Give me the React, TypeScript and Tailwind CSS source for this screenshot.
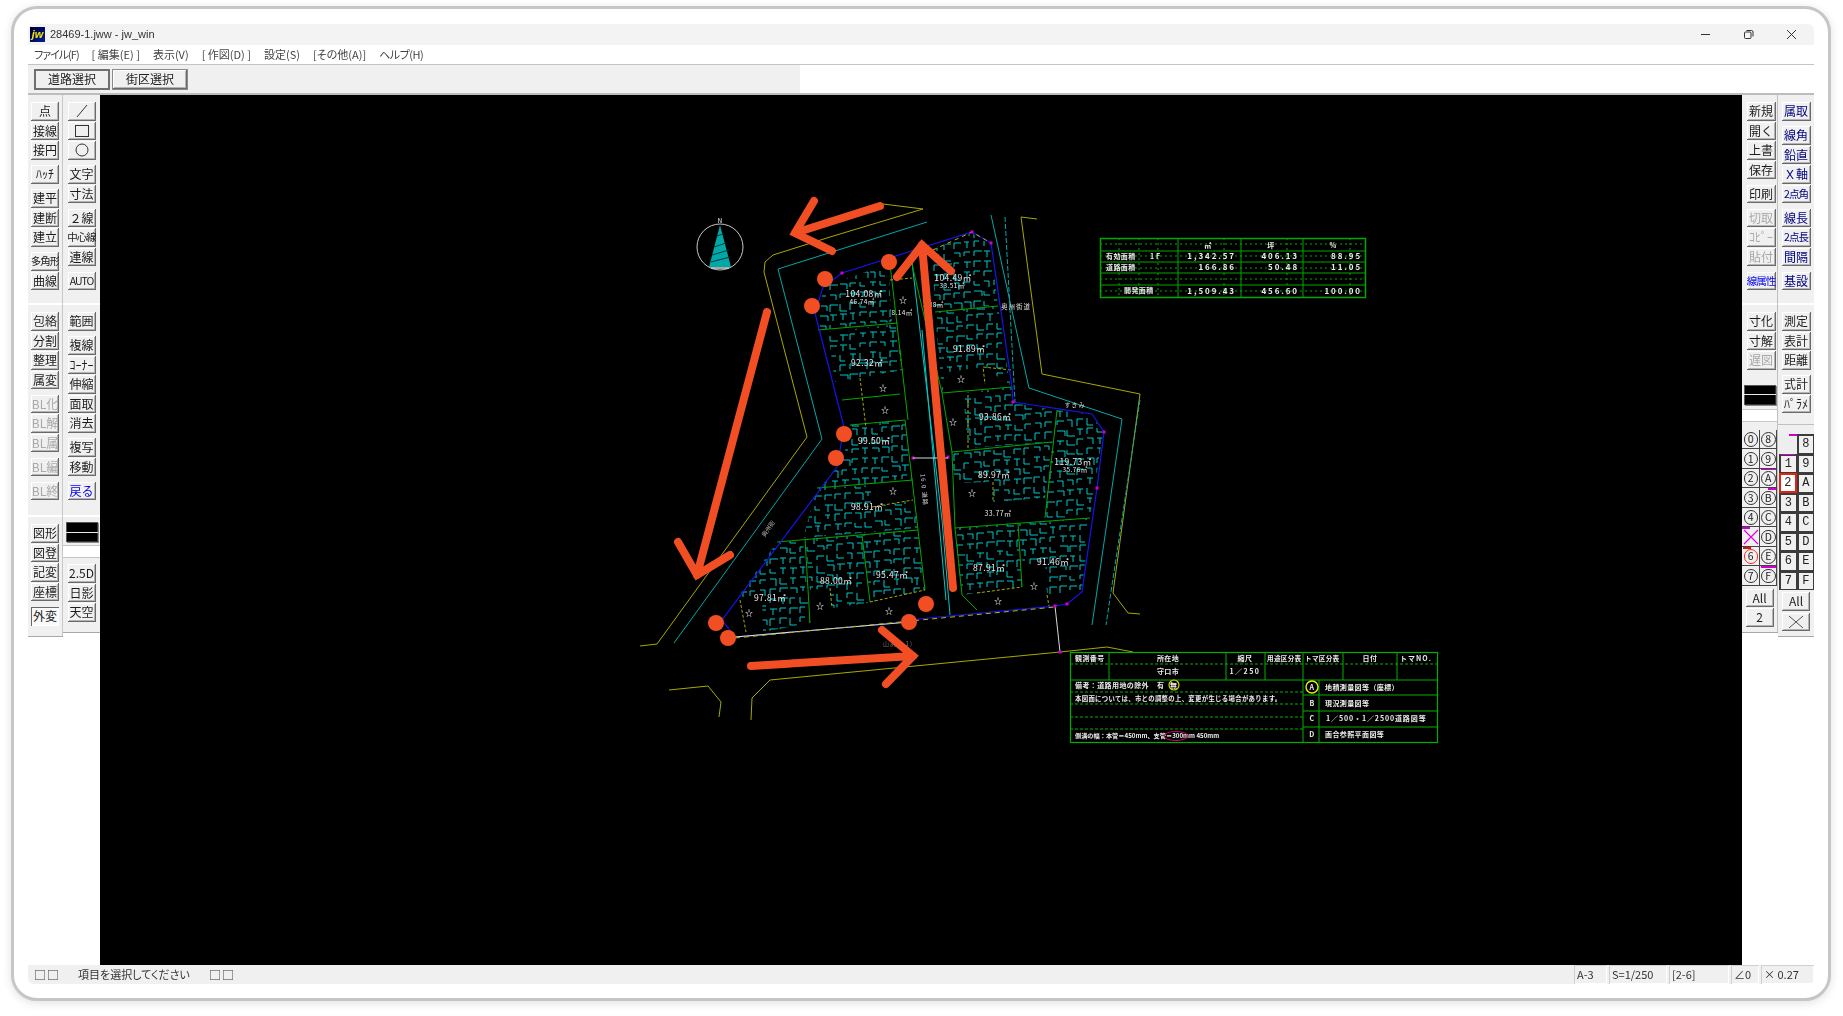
import { type ReactNode } from "react";

type Tone = "dim" | "blue" | "navy";
type Item = { label: ReactNode; tone?: Tone; small?: boolean };

const L = (label: ReactNode, tone?: Tone, small?: boolean): Item => ({ label, tone, small });

const raised =
  "shadow-[inset_-1px_-1px_0_#6a6a6a,inset_1px_1px_0_#ffffff,inset_-2px_-2px_0_#b4b4b4] bg-[#f0f0f0]";

function Tool({ item, wide }: { item: Item; wide?: boolean }) {
  const color =
    item.tone === "dim"
      ? "text-[#a9a9a9]"
      : item.tone === "blue"
        ? "text-[#0000f0]"
        : item.tone === "navy"
          ? "text-[#000080]"
          : "text-[#1c1c1c]";
  return (
    <button
      className={`flex h-[18.5px] items-center justify-center overflow-hidden whitespace-nowrap leading-none ${raised} ${color} ${
        wide ? "w-[29px]" : "w-[28px]"
      } ${item.small ? "text-[10.5px] tracking-[-1px]" : "text-[12px]"}`}
    >
      {item.label}
    </button>
  );
}

function Groups({ groups, wide }: { groups: Item[][]; wide?: boolean }) {
  return (
    <div className="flex flex-col items-center gap-[5.5px]">
      {groups.map((g, i) => (
        <div key={i} className="flex flex-col gap-[1px]">
          {g.map((item, j) => (
            <Tool key={j} item={item} wide={wide} />
          ))}
        </div>
      ))}
    </div>
  );
}

const Glyph = ({ children }: { children: ReactNode }) => (
  <svg width="16" height="14" viewBox="0 0 16 14" fill="none" stroke="#333" strokeWidth="1">
    {children}
  </svg>
);

const ColorBox = () => (
  <div className="flex h-[20px] w-[32px] flex-col justify-center bg-black shadow-[inset_1px_1px_0_#555,inset_-1px_-1px_0_#333,1px_1px_0_#888]">
    <div className="h-px w-full bg-[#e8e8e8]" />
  </div>
);

/* ---------- layer panels on the right ---------- */
const circleCells = ["0", "8", "1", "9", "2", "A", "3", "B", "4", "C", "X", "D", "6", "E", "7", "F"];
const numCells = ["0", "8", "1", "9", "2", "A", "3", "B", "4", "C", "5", "D", "6", "E", "7", "F"];

function CircleCell({ c }: { c: string }) {
  return (
    <div className="relative flex h-[19.5px] w-[17.5px] items-center justify-center bg-[#f0f0f0] shadow-[inset_-1px_-1px_0_#444]">
      {c === "X" ? (
        <svg width="16" height="16" viewBox="0 0 16 16" stroke="#e000e0" strokeWidth="1.2">
          <path d="M1 1 15 15M15 1 1 15" />
        </svg>
      ) : (
        <span
          className={`flex h-[14.5px] w-[14.5px] items-center justify-center rounded-full border text-[10.5px] leading-none ${
            c === "6" ? "border-[#f03020] text-[#222]" : "border-[#333] text-[#222]"
          }`}
        >
          {c}
        </span>
      )}
      {c === "A" && <i className="absolute left-[1px] top-0 h-[1.5px] w-[15px] bg-[#d000d0]" />}
      {c === "B" && <i className="absolute right-[1px] top-0 h-[1.5px] w-[8px] bg-[#d000d0]" />}
      {c === "X" && <i className="absolute left-0 top-0 h-[1.5px] w-[8px] bg-[#d000d0]" />}
      {c === "6" && <i className="absolute left-[1px] top-0 h-[2px] w-[8px] bg-[#e01010]" />}
      {c === "F" && <i className="absolute left-[1px] top-0 h-[1.5px] w-[15px] bg-[#d000d0]" />}
    </div>
  );
}

function NumCell({ c }: { c: string }) {
  if (c === "0") {
    return (
      <div className="relative h-[19.5px] w-[17.5px] bg-[#eeeeee]">
        <i className="absolute right-0 top-0 h-[1.5px] w-[8px] bg-[#d000d0]" />
      </div>
    );
  }
  const active = c === "2";
  return (
    <div
      className={`relative flex h-[19.5px] w-[17.5px] items-center justify-center font-['Liberation_Mono',monospace] text-[12px] leading-none text-[#222] ${
        active
          ? "border-2 border-[#e82010] bg-white"
          : "border-b border-l-2 border-r border-t-2 border-[#3c3c3c] bg-[#f0f0f0]"
      }`}
    >
      {c}
      {c === "1" && <i className="absolute -top-[2px] left-0 h-[1.5px] w-[14px] bg-[#d000d0]" />}
    </div>
  );
}

/* ---------- CAD drawing, all coordinates are page pixels ---------- */
type Pt = [number, number];

const lots: Pt[][] = [
  [[823, 287], [888, 264], [892, 322], [818, 330]],
  [[932, 250], [972, 233], [990, 245], [998, 305], [935, 312]],
  [[828, 332], [898, 324], [903, 370], [860, 378], [835, 382]],
  [[935, 312], [998, 306], [1010, 385], [983, 367], [948, 372], [942, 393]],
  [[963, 393], [1012, 387], [1013, 403], [1055, 410], [1052, 442], [968, 448]],
  [[1057, 410], [1092, 415], [1103, 433], [1094, 490], [1090, 517], [1045, 518], [1052, 445]],
  [[952, 452], [1052, 442], [1045, 498], [993, 502], [993, 482], [953, 483]],
  [[955, 528], [1018, 523], [1022, 587], [977, 593], [962, 595]],
  [[1018, 524], [1090, 518], [1082, 590], [1047, 595], [1045, 563], [1023, 565]],
  [[850, 425], [905, 420], [912, 480], [820, 488], [843, 460]],
  [[817, 488], [872, 485], [873, 507], [913, 500], [918, 528], [803, 538]],
  [[777, 542], [803, 540], [810, 623], [763, 632], [762, 597], [738, 597]],
  [[805, 539], [862, 535], [868, 603], [832, 608], [830, 588], [810, 590]],
  [[862, 534], [918, 530], [925, 590], [870, 602]],
];

function wallPath(seed: number, poly: Pt[]) {
  let s = seed * 7919 + 13;
  const rnd = () => {
    s = (s * 1664525 + 1013904223) % 4294967296;
    return s / 4294967296;
  };
  const xs = poly.map((p) => p[0]);
  const ys = poly.map((p) => p[1]);
  const x0 = Math.min(...xs);
  const x1 = Math.max(...xs);
  const y0 = Math.min(...ys);
  const y1 = Math.max(...ys);
  const step = 10;
  const tilt = -0.085;
  let d = "";
  for (let y = y0 - 8; y < y1 + 8; y += step) {
    for (let x = x0 - 8; x < x1 + 8; x += step) {
      const px = Math.round(x);
      const py = Math.round(y + (x - x0) * tilt);
      const w = 5 + Math.round(rnd() * 3);
      const h = 4 + Math.round(rnd() * 3);
      const kind = rnd();
      if (kind < 0.4) d += `M${px} ${py + h}V${py}h${w}`;
      else if (kind < 0.6) d += `M${px} ${py}h${w}v${h}`;
      else if (kind < 0.8) d += `M${px} ${py}h${w}M${px + 3} ${py}v${h}`;
      else d += `M${px} ${py}v${h}h${w}`;
    }
  }
  return d;
}

const pts = (p: Pt[]) => p.map((q) => q.join(",")).join(" ");

const boundary: Pt[] = [
  [972, 232], [991, 243], [1012, 387], [1013, 402], [1092, 414], [1104, 432], [1097, 488], [1082, 592],
  [1067, 604], [1055, 606], [918, 619], [909, 622], [735, 637], [722, 620], [837, 467], [844, 427],
  [815, 313], [823, 287], [842, 273],
];

const roadsYellow = [
  "883,204 923,209 830,237 773,255 765,262 764,272 807,437 657,644 640,646",
  "1037,219 1021,217 1042,374 1140,394 1113,593 1128,613 1140,614",
  "669,690 708,686 721,702 719,717",
  "751,720 752,698 770,680 1060,652 1107,647 1133,652",
];

const roadsCyan = [
  "927,222 778,269 822,439 674,643",
  "991,215 1029,388 1122,419 1092,625",
  "1005,217 1015,402",
  "1140,400 1106,625",
];

const greenLines = [
  "818,330 898,323", "890,264 908,420", "935,312 998,306", "911,260 942,393 952,452 955,528 962,595",
  "942,393 1012,387", "1057,410 1045,518", "952,452 1052,442", "955,528 1090,518", "1018,523 1022,587",
  "850,425 905,420", "905,420 918,530 925,590", "817,488 913,480", "777,542 918,530", "805,539 810,623",
  "862,535 870,602", "842,400 900,394", "962,595 977,610",
];

const parking = [
  "890,280 912,278", "860,378 866,428", "1011,370 983,367 985,384", "968,395 968,448",
  "870,602 925,590", "977,593 1022,587", "830,588 832,608", "1047,595 1049,606", "740,600 746,632",
  "872,507 913,500", "993,482 993,502",
];

const stars: Pt[] = [
  [903, 300], [883, 388], [885, 410], [961, 379], [953, 422], [972, 493], [893, 491], [820, 606], [749, 613],
  [889, 611], [998, 601], [1034, 586],
];

const areas: [string, number, number, number][] = [
  ["104.08㎡", 864, 297, 8.5], ["46.74㎡", 862, 304, 6.5], ["104.49㎡", 953, 281, 8.5], ["33.51㎡", 952, 288, 6.5],
  ["8.14㎡", 902, 315, 6.5], ["1.88㎡", 933, 307, 6.5], ["92.32㎡", 867, 366, 8.5], ["91.89㎡", 969, 352, 8.5],
  ["93.86㎡", 995, 420, 8.5], ["99.50㎡", 874, 444, 8.5], ["119.73㎡", 1073, 465, 8.5], ["35.76㎡", 1075, 472, 6.5],
  ["89.97㎡", 994, 478, 8.5], ["98.91㎡", 867, 510, 8.5], ["33.77㎡", 998, 516, 7], ["95.47㎡", 892, 578, 8.5],
  ["88.00㎡", 836, 584, 8.5], ["97.81㎡", 770, 601, 8.5], ["87.91㎡", 989, 571, 8.5], ["91.46㎡", 1053, 565, 8.5],
];

const dots: Pt[] = [
  [889, 262], [825, 279], [812, 306], [844, 434], [836, 458], [716, 623], [728, 638], [909, 622], [926, 604],
];

const arrows = [
  "M880 206 795 233M814 201 795 233 832 251",
  "M953 588 922 245M897 277 922 245 951 271",
  "M767 312 697 575M678 542 697 575 730 555",
  "M751 666 913 656M882 630 913 656 886 684",
];

const Label = ({ x, y, children, size = 7, anchor = "start", spacing = 0.4 }: {
  x: number;
  y: number;
  children: ReactNode;
  size?: number;
  anchor?: "start" | "middle" | "end";
  spacing?: number;
}) => (
  <text x={x} y={y} fontSize={size} fill="#ececec" textAnchor={anchor} fontWeight={700} letterSpacing={spacing}>
    {children}
  </text>
);

function AreaTable() {
  const g = "#00a800";
  const wide = 1.9;
  return (
    <g>
      <rect x="1100.5" y="238.5" width="265" height="59" fill="none" stroke={g} strokeWidth="1.5" />
      {[251, 262, 273, 285].map((y) => (
        <path key={y} d={`M1100 ${y}H1366`} stroke={g} />
      ))}
      {[1178, 1241, 1303].map((x) => (
        <path key={x} d={`M${x} 238V297`} stroke={g} />
      ))}
      {[244, 256, 268, 279, 291].map((y) => (
        <path key={y} d={`M1100 ${y}H1366`} stroke={g} strokeDasharray="2 3" />
      ))}
      {[1119, 1139, 1158, 1224, 1287, 1350].map((x) => (
        <path key={x} d={`M${x} 238V297`} stroke={g} strokeDasharray="2 3" />
      ))}
      <Label x={1208} y={248} anchor="middle">㎡</Label>
      <Label x={1271} y={248} anchor="middle">坪</Label>
      <Label x={1333} y={248} anchor="middle">%</Label>
      <Label x={1106} y={259}>有効面積</Label>
      <Label x={1150} y={259} spacing={wide}>1F</Label>
      <Label x={1236} y={259} anchor="end" size={8} spacing={wide}>1,342.57</Label>
      <Label x={1299} y={259} anchor="end" size={8} spacing={wide}>406.13</Label>
      <Label x={1362} y={259} anchor="end" size={8} spacing={wide}>88.95</Label>
      <Label x={1106} y={270}>道路面積</Label>
      <Label x={1236} y={270} anchor="end" size={8} spacing={wide}>166.86</Label>
      <Label x={1299} y={270} anchor="end" size={8} spacing={wide}>50.48</Label>
      <Label x={1362} y={270} anchor="end" size={8} spacing={wide}>11.05</Label>
      <Label x={1124} y={293}>開発面積</Label>
      <Label x={1236} y={294} anchor="end" size={8} spacing={wide}>1,509.43</Label>
      <Label x={1299} y={294} anchor="end" size={8} spacing={wide}>456.60</Label>
      <Label x={1362} y={294} anchor="end" size={8} spacing={wide}>100.00</Label>
    </g>
  );
}

function TitleTable() {
  const g = "#00b000";
  return (
    <g>
      <rect x="1070.5" y="652.5" width="367" height="90" fill="none" stroke={g} strokeWidth="1.2" />
      <path d="M1070 680H1437M1303 695H1437M1303 711H1437M1303 727H1437M1303 680V743M1319 680V743" stroke={g} />
      {[1109, 1226, 1265, 1303, 1343, 1397].map((x) => (
        <path key={x} d={`M${x} 652V680`} stroke={g} />
      ))}
      {[664, 692, 704, 717, 729].map((y) => (
        <path key={y} d={y === 664 ? "M1070 664H1437" : `M1070 ${y}H1303`} stroke={g} strokeDasharray="3 2" />
      ))}
      <Label x={1075} y={661}>観測番号</Label>
      <Label x={1168} y={661} anchor="middle">所在地</Label>
      <Label x={1245} y={661} anchor="middle">縮尺</Label>
      <Label x={1267} y={661} size={6.6} spacing={0.3}>用途区分表</Label>
      <Label x={1305} y={661} size={6.6} spacing={0.3}>トマ区分表</Label>
      <Label x={1370} y={661} anchor="middle">日付</Label>
      <Label x={1400} y={661} spacing={1}>トマNO.</Label>
      <Label x={1168} y={674} anchor="middle">守口市</Label>
      <Label x={1245} y={674} anchor="middle" spacing={1.5}>1／250</Label>
      <Label x={1075} y={688}>備考：道路用地の除外</Label>
      <Label x={1157} y={688}>有</Label>
      <Label x={1170} y={688}>無</Label>
      <Label x={1075} y={701} size={6.4} spacing={0.3}>本図面については、市との調整の上、変更が生じる場合があります。</Label>
      <Label x={1075} y={738} size={6.2} spacing={0}>側溝の幅：本管＝450mm、支管＝300mm 450mm</Label>
      <Label x={1312} y={690} anchor="middle">A</Label>
      <Label x={1312} y={706} anchor="middle">B</Label>
      <Label x={1312} y={721} anchor="middle">C</Label>
      <Label x={1312} y={737} anchor="middle">D</Label>
      <Label x={1325} y={690}>地積測量図等（座標）</Label>
      <Label x={1325} y={706}>現況測量図等</Label>
      <Label x={1326} y={721} spacing={0.9}>1／500・1／2500道路図等</Label>
      <Label x={1325} y={737}>画合参照平面図等</Label>
      <circle cx="1312" cy="687" r="6" fill="none" stroke="#f0f000" strokeWidth="1.4" />
      <circle cx="1174" cy="685" r="5" fill="none" stroke="#d8d800" strokeWidth="1.2" />
      <ellipse cx="1176" cy="736" rx="12" ry="4.5" fill="none" stroke="#d0006a" strokeWidth="1" />
    </g>
  );
}

function Drawing() {
  return (
    <svg viewBox="100 95 1642 870" className="block h-full w-full" fill="none">
      <defs>
        {lots.map((p, i) => (
          <clipPath id={`lot-${i}`} key={i}>
            <polygon points={pts(p)} />
          </clipPath>
        ))}
      </defs>

      {/* north mark */}
      <circle cx="720" cy="247" r="23" stroke="#c8c8c8" strokeWidth="1" />
      <polygon points="720,225 709,267 731,267" fill="#00a8a8" />
      <path d="M714 247 726 243M712 255 729 250M711 262 730 257M717 236 723 234" stroke="#003838" />
      <path d="M711 268H729" stroke="#e0e0e0" strokeWidth="1.5" />
      <text x="720" y="223" fontSize="6" fill="#fff" textAnchor="middle">N</text>

      {/* roads */}
      {roadsYellow.map((p) => (
        <polyline key={p} points={p} stroke="#a8a800" strokeWidth="1" />
      ))}
      {roadsCyan.map((p, i) => (
        <polyline key={p} points={p} stroke="#00a8a8" strokeWidth="1" strokeDasharray={i > 1 ? "5 2" : undefined} />
      ))}

      {/* walls */}
      {lots.map((p, i) => (
        <g key={i} clipPath={`url(#lot-${i})`}>
          <path d={wallPath(i + 1, p)} stroke="#00c8c8" strokeWidth="1" />
        </g>
      ))}

      {/* center road */}
      <path d="M912 262 942 520 950 615M922 330 946 600" stroke="#00c8c8" />

      {greenLines.map((p) => (
        <polyline key={p} points={p} stroke="#00a800" strokeWidth="1" />
      ))}
      {parking.map((p) => (
        <polyline key={p} points={p} stroke="#a8a800" strokeWidth="1" strokeDasharray="3 2" />
      ))}

      {/* site boundary */}
      <polygon points={pts(boundary)} stroke="#1414f0" strokeWidth="1.2" />
      <polyline points="735,637 909,622" stroke="#e0e0e0" strokeWidth="1.2" />
      <polyline points="735,638 1055,607" stroke="#b8b800" strokeWidth="1" strokeDasharray="5 4" />
      <polyline points="933,250 972,232 991,243" stroke="#b8b800" strokeWidth="1" strokeDasharray="4 4" />
      <polyline points="1055,606 1060,652" stroke="#d8d8d8" strokeWidth="1" />
      {([[842, 273], [972, 232], [991, 243], [1013, 402], [1104, 432], [1097, 488], [1055, 606], [1067, 604], [1060, 652], [913, 458], [948, 457]] as Pt[]).map(
        ([x, y]) => (
          <rect key={`${x}-${y}`} x={x - 1.5} y={y - 1.5} width="3" height="3" fill="#d000d0" />
        ),
      )}
      <path d="M913 458H948" stroke="#d8d8d8" />

      {stars.map(([x, y]) => (
        <text key={`${x}${y}`} x={x} y={y + 3} fontSize="8" fill="#fff" textAnchor="middle">☆</text>
      ))}
      {areas.map(([t, x, y, size]) => (
        <text key={t} x={x} y={y} fontSize={size} fill="#e8e8e8" textAnchor="middle" letterSpacing="0.4">{t}</text>
      ))}
      <text x="1016" y="309" fontSize="6.5" fill="#e0e0e0" textAnchor="middle" letterSpacing="1">奥州街道</text>
      <text x="1075" y="407" fontSize="6" fill="#d0d0d0" textAnchor="middle" letterSpacing="1">すきみ</text>
      <text x="898" y="646" fontSize="6" fill="#707070" textAnchor="middle" letterSpacing="1">山尻 (-1)</text>
      <text x="0" y="0" fontSize="6" fill="#b8b8b8" textAnchor="middle" transform="translate(770 530) rotate(-55)">奥州街</text>
      <text x="0" y="0" fontSize="6" fill="#d0d0d0" textAnchor="middle" letterSpacing="1" transform="translate(922 490) rotate(85)">16.0 道路</text>

      <AreaTable />
      <TitleTable />

      {/* markup */}
      {arrows.map((d) => (
        <path key={d} d={d} stroke="#f24e23" strokeWidth="8" strokeLinecap="round" strokeLinejoin="miter" />
      ))}
      {dots.map(([x, y]) => (
        <circle key={`${x}${y}`} cx={x} cy={y} r="8" fill="#f24e23" />
      ))}
    </svg>
  );
}

export default function App() {
  const sectionLine = "border-b-2 border-b-white";
  return (
    <div className="h-screen w-screen overflow-hidden bg-white pb-[15px] pl-[11px] pr-[12px] pt-[6px] font-['Noto_Sans_CJK_JP','Liberation_Sans',sans-serif]">
      <div className="flex h-full flex-col rounded-[26px] border-[3px] border-[#c6c6c6] bg-white pb-[14px] pl-[14px] pr-[14px] pt-[15px] shadow-[0_2px_10px_rgba(0,0,0,0.12)]">
        <div className="flex h-full flex-col blur-[0.3px]">
          {/* title bar */}
          <div className="flex h-[21px] items-center rounded-t-[6px] bg-[#f3f3f3] pl-[2px] font-['Liberation_Sans',sans-serif] text-[11px] text-[#333]">
            <div className="flex h-[15px] w-[15px] items-center justify-center bg-gradient-to-br from-[#000030] to-[#0020a0] text-[11px] font-bold italic leading-none text-[#f4e800]">
              jw
            </div>
            <span className="ml-[5px]">28469-1.jww - jw_win</span>
            <div className="ml-auto flex items-center gap-[32px] pr-[17px]">
              <svg width="11" height="11" viewBox="0 0 11 11" stroke="#333"><path d="M1 5.5H10" /></svg>
              <svg width="11" height="11" viewBox="0 0 11 11" stroke="#333" fill="none">
                <rect x="1.5" y="3" width="6.5" height="6.5" rx="1" />
                <path d="M3.5 1.5H8.5A1.5 1.5 0 0 1 10 3V7.5" />
              </svg>
              <svg width="11" height="11" viewBox="0 0 11 11" stroke="#333"><path d="M1 1 10 10M10 1 1 10" /></svg>
            </div>
          </div>

          {/* menu */}
          <div className="flex h-[20px] items-center gap-[13px] whitespace-nowrap border-b border-[#c4c4c4] pl-[6px] text-[11px] text-[#444] [font-feature-settings:'palt']">
            <span className="tracking-[-1px]">ファイル(F)</span>
            <span>[ 編集(E) ]</span>
            <span>表示(V)</span>
            <span>[ 作図(D) ]</span>
            <span>設定(S)</span>
            <span>[その他(A)]</span>
            <span className="tracking-[-0.5px]">ヘルプ(H)</span>
          </div>

          {/* tool options */}
          <div className="flex h-[30px] border-b-2 border-[#bdbdbd]">
            <div className="flex w-[772px] items-center gap-[2px] bg-[#f0f0f0] pl-[6px]">
              <button className="h-[21px] w-[76px] border-2 border-[#707070] bg-[#f0f0f0] text-[12px] leading-none text-[#222]">
                道路選択
              </button>
              <button className={`h-[21px] w-[76px] border border-[#8a8a8a] text-[12px] leading-none text-[#222] ${raised}`}>
                街区選択
              </button>
            </div>
          </div>

          {/* body */}
          <div className="flex min-h-0 flex-1">
            <aside className="flex w-[72px] items-start bg-white">
              <div className="w-[35px] border-r border-r-[#c8c8c8] bg-[#f0f0f0] shadow-[0_1px_0_#a8a8a8]">
                <div className={`h-[210px] pt-[7px] ${sectionLine}`}>
                  <Groups
                    groups={[
                      [L("点"), L("接線"), L("接円")],
                      [L("ﾊｯﾁ")],
                      [L("建平"), L("建断"), L("建立")],
                      [L("多角形", undefined, true), L("曲線")],
                    ]}
                  />
                </div>
                <div className={`h-[212px] pt-[7px] ${sectionLine}`}>
                  <Groups
                    groups={[
                      [L("包絡"), L("分割"), L("整理"), L("属変")],
                      [L("BL化", "dim"), L("BL解", "dim"), L("BL属", "dim")],
                      [L("BL編", "dim")],
                      [L("BL終", "dim")],
                    ]}
                  />
                </div>
                <div className="h-[119px] pt-[7px]">
                  <div className="flex flex-col items-center gap-[1px]">
                    <Tool item={L("図形")} />
                    <Tool item={L("図登")} />
                    <Tool item={L("記変")} />
                    <Tool item={L("座標")} />
                    <button className="mt-[4.5px] flex h-[19px] w-[28px] items-center justify-center bg-[#fafafa] text-[12px] leading-none text-[#222] shadow-[inset_1px_1px_0_#666,inset_-1px_-1px_0_#fff]">
                      外変
                    </button>
                  </div>
                </div>
              </div>
              <div className="w-[37px] bg-[#f0f0f0] shadow-[0_1px_0_#a8a8a8]">
                <div className={`h-[210px] pt-[7px] ${sectionLine}`}>
                  <Groups
                    groups={[
                      [
                        L(<Glyph><path d="M3 13 13 1" /></Glyph>),
                        L(<Glyph><rect x="1.5" y="1.5" width="13" height="11" /></Glyph>),
                        L(<Glyph><circle cx="8" cy="7" r="6" /></Glyph>),
                      ],
                      [L("文字"), L("寸法")],
                      [L("２線"), L("中心線", undefined, true), L("連線")],
                      [L("AUTO", undefined, true)],
                    ]}
                  />
                </div>
                <div className={`h-[212px] pt-[7px] ${sectionLine}`}>
                  <Groups
                    groups={[
                      [L("範囲")],
                      [L("複線"), L("ｺｰﾅｰ"), L("伸縮"), L("面取"), L("消去")],
                      [L("複写"), L("移動")],
                      [L("戻る", "blue")],
                    ]}
                  />
                </div>
                <div className="h-[115px]">
                  <div className="flex h-[29px] justify-center border-b border-[#c4c4c4] bg-[#f0f0f0] pt-[5px]">
                    <ColorBox />
                  </div>
                  <div className="h-[12px] border-b border-[#c4c4c4] bg-white" />
                  <div className="flex flex-col items-center gap-[1px] pt-[6px]">
                    <Tool item={L("2.5D")} />
                    <Tool item={L("日影")} />
                    <Tool item={L("天空")} />
                  </div>
                </div>
              </div>
            </aside>

            <main className="min-w-0 flex-1 bg-black">
              <Drawing />
            </main>

            <aside className="flex w-[72px] items-start bg-white">
              <div className="w-[36px] border-r border-r-[#c0c0c0] bg-[#f0f0f0] shadow-[0_1px_0_#a8a8a8]">
                <div className={`h-[210px] pl-[3px] pt-[7px] ${sectionLine}`}>
                  <Groups
                    wide
                    groups={[
                      [L("新規"), L("開く"), L("上書"), L("保存")],
                      [L("印刷")],
                      [L("切取", "dim"), L("ｺﾋﾟｰ", "dim"), L("貼付", "dim")],
                      [L("線属性", "blue", true)],
                    ]}
                  />
                </div>
                <div className="pl-[3px] pt-[7px]">
                  <Groups wide groups={[[L("寸化"), L("寸解"), L("遅図", "dim")]]} />
                </div>
                <div className="flex h-[36px] items-center justify-center bg-[#f0f0f0] pt-[14px]">
                  <ColorBox />
                </div>
                <div className="mt-[3px] h-[13px] border-y border-[#c8c8c8] bg-white" />
                <div className="grid grid-cols-2 pt-[8px]">
                  {circleCells.map((c) => (
                    <CircleCell key={c} c={c} />
                  ))}
                </div>
                <div className="flex h-[46px] flex-col items-center gap-[1px] pt-[3px]">
                  <Tool item={L("All")} />
                  <Tool item={L("2")} />
                </div>
              </div>
              <div className="w-[36px] bg-[#f0f0f0] shadow-[0_1px_0_#a8a8a8]">
                <div className={`h-[210px] pt-[7px] ${sectionLine}`}>
                  <Groups
                    wide
                    groups={[
                      [L("属取", "navy")],
                      [L("線角", "navy"), L("鉛直", "navy"), L("Ｘ軸", "navy"), L("2点角", "navy", true)],
                      [L("線長", "navy"), L("2点長", "navy", true), L("間隔", "navy")],
                      [L("基設", "navy")],
                    ]}
                  />
                </div>
                <div className="h-[120px] border-b border-[#c0c0c0] pt-[7px]">
                  <Groups
                    wide
                    groups={[
                      [L("測定"), L("表計"), L("距離")],
                      [L("式計"), L("ﾊﾟﾗﾒ")],
                    ]}
                  />
                </div>
                <div className="grid grid-cols-2 pl-[1px] pt-[9px]">
                  {numCells.map((c) => (
                    <NumCell key={c} c={c} />
                  ))}
                </div>
                <div className="flex flex-col items-center gap-[2px] pb-[5px] pt-[2px]">
                  <Tool item={L("All")} />
                  <Tool
                    item={L(
                      <svg width="16" height="14" viewBox="0 0 16 14" stroke="#555" strokeWidth="1">
                        <path d="M1 1 15 13M15 1 1 13" />
                      </svg>,
                    )}
                  />
                </div>
              </div>
            </aside>
          </div>

          {/* status bar */}
          <div className="flex h-[19px] items-center whitespace-nowrap rounded-b-[6px] bg-[#f0f0f0] text-[11px] leading-none text-[#333] [font-feature-settings:'palt']">
            <span className="ml-[6px] w-[44px] text-[12px] tracking-[1px]">□□</span>
            <span className="w-[131px]">項目を選択してください</span>
            <span className="text-[12px] tracking-[1px]">□□</span>
            <div className="ml-auto flex h-full items-stretch gap-[2px]">
              {[
                ["A-3", "w-[33px]"],
                ["S=1/250", "w-[58px]"],
                ["[2-6]", "w-[60px]"],
                ["∠0", "w-[28px]"],
                ["× 0.27", "w-[53px]"],
              ].map(([t, w]) => (
                <span
                  key={t}
                  className={`flex items-center pl-[3px] shadow-[inset_1px_1px_0_#d0d0d0,inset_-1px_-1px_0_#ffffff] ${w}`}
                >
                  {t}
                </span>
              ))}
            </div>
          </div>
        </div>
      </div>
    </div>
  );
}
